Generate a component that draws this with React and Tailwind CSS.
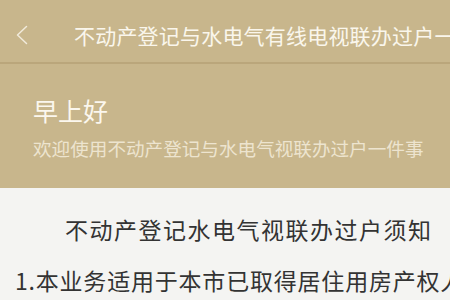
import React from 'react';

const cjk = { fontFamily: '"Noto Sans CJK SC", "Liberation Sans", sans-serif' };

const App = () => {
  return (
    <div className="w-[450px] h-[300px] overflow-hidden bg-[#f4f4f2]" style={cjk}>
      {/* Nav bar */}
      <div className="h-[64px] bg-[#c8b68c] border-b-2 border-[#baa67b] flex items-center pt-[7px] whitespace-nowrap overflow-hidden">
        <svg width="13" height="20" viewBox="0 0 13 20" className="ml-[15px] shrink-0">
          <path d="M11.5 1.5 L2.5 10 L11.5 18.5" fill="none" stroke="#f1eadb" strokeWidth="1.5" strokeLinecap="round" strokeLinejoin="round" />
        </svg>
        <span className="ml-[46px] text-[21px] leading-[28px] text-[#faf6ec] tracking-[0.2px]">
          不动产登记与水电气有线电视联办过户一件事
        </span>
      </div>

      {/* Greeting */}
      <div className="h-[124px] bg-[#c8b68c] pl-[33px] pt-[31px]">
        <div className="text-[25px] leading-[30px] text-[#fbf7ee]">早上好</div>
        <div className="mt-[11px] text-[18.6px] leading-[24px] text-[#ede4cf] whitespace-nowrap">
          欢迎使用不动产登记与水电气视联办过户一件事
        </div>
      </div>

      {/* Notice */}
      <div className="pt-[26px]">
        <div className="pl-[65px] text-[23px] leading-[30px] tracking-[1.5px] text-[#333333] whitespace-nowrap">
          不动产登记水电气视联办过户须知
        </div>
        <div className="mt-[21px] pl-[15px] text-[23px] leading-[30px] tracking-[0.8px] text-[#333333] whitespace-nowrap">
          1.本业务适用于本市已取得居住用房产权人
        </div>
      </div>
    </div>
  );
};

export default App;
